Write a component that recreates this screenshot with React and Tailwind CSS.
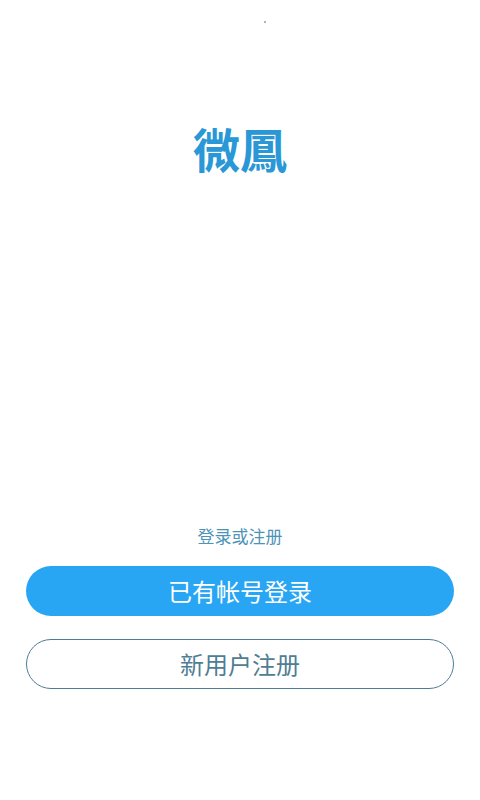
export default function App() {
  return (
    <div
      className="relative flex h-[800px] w-[480px] flex-col items-center bg-white"
      style={{ fontFamily: '"Noto Sans CJK SC", "Noto Sans", sans-serif' }}
    >
      <span className="absolute left-[264px] top-[21px] h-[2px] w-[2px] rounded-full bg-[#9a9a9a]" />

      <h1 className="mt-[120px] text-[47px] font-bold leading-[56px] text-[#2a97d6]">微鳳</h1>

      <div className="flex-1" />

      <p className="mb-[19px] text-[17px] leading-[22px] text-[#4d93b8]">登录或注册</p>

      <div className="flex w-full flex-col gap-[23px] px-[26px] pb-[111px]">
        <button className="flex h-[50px] items-center justify-center rounded-full bg-[#29a6f3] text-[24px] font-normal text-white">
          已有帐号登录
        </button>
        <button className="flex h-[50px] items-center justify-center rounded-full border border-[#4c7c99] bg-white text-[24px] font-normal text-[#4f7d93]">
          新用户注册
        </button>
      </div>
    </div>
  );
}
